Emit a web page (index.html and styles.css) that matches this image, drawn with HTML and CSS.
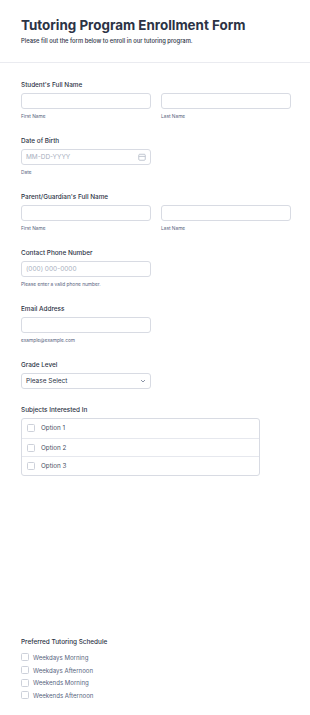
FILE: index.html
```html
<!DOCTYPE html>
<html>
<head lang="en">
    <meta charset="UTF-8">
    <title>Tutoring Program Enrollment Form</title>
    <link rel="stylesheet" href="styles.css">
</head>
<body>
<div class="header">
    <h1>Tutoring Program Enrollment Form</h1>
    <p>Please fill out the form below to enroll in our tutoring program.</p>
</div>
<div class="form">
    <div class="field">
        <div class="label">Student's Full Name</div>
        <div class="pair">
            <div>
                <div class="input"></div>
                <div class="sub">First Name</div>
            </div>
            <div>
                <div class="input"></div>
                <div class="sub">Last Name</div>
            </div>
        </div>
    </div>
    <div class="field">
        <div class="label">Date of Birth</div>
        <div class="input half">
            <span class="ph">MM-DD-YYYY</span>
            <svg width="8" height="8" viewBox="0 0 8 8"><rect x="0.75" y="1.25" width="6.5" height="6" rx="1" fill="none" stroke="#b4bac6" stroke-width="0.8"/><line x1="0.75" y1="3.4" x2="7.25" y2="3.4" stroke="#b4bac6" stroke-width="0.8"/></svg>
        </div>
        <div class="sub">Date</div>
    </div>
    <div class="field">
        <div class="label">Parent/Guardian's Full Name</div>
        <div class="pair">
            <div>
                <div class="input"></div>
                <div class="sub">First Name</div>
            </div>
            <div>
                <div class="input"></div>
                <div class="sub">Last Name</div>
            </div>
        </div>
    </div>
    <div class="field">
        <div class="label">Contact Phone Number</div>
        <div class="input half"><span class="ph">(000) 000-0000</span></div>
        <div class="sub">Please enter a valid phone number.</div>
    </div>
    <div class="field">
        <div class="label">Email Address</div>
        <div class="input half"></div>
        <div class="sub">example@example.com</div>
    </div>
    <div class="field">
        <div class="label">Grade Level</div>
        <div class="input half select">
            <span>Please Select</span>
            <svg width="6" height="4" viewBox="0 0 6 4"><path d="M1 1l2 2 2-2" fill="none" stroke="#6f7a90" stroke-width="0.8"/></svg>
        </div>
    </div>
    <div class="field">
        <div class="label">Subjects Interested In</div>
        <div class="options">
            <div class="opt"><span class="box"></span>Option 1</div>
            <div class="opt"><span class="box"></span>Option 2</div>
            <div class="opt"><span class="box"></span>Option 3</div>
        </div>
    </div>
    <div class="field schedule">
        <div class="label">Preferred Tutoring Schedule</div>
        <div class="check"><span class="box"></span>Weekdays Morning</div>
        <div class="check"><span class="box"></span>Weekdays Afternoon</div>
        <div class="check"><span class="box"></span>Weekends Morning</div>
        <div class="check"><span class="box"></span>Weekends Afternoon</div>
    </div>
</div>
</body>
</html>
```
FILE: styles.css
```css
*{
    margin:0;
    padding:0;
    box-sizing: border-box;
}
body{
    font-family: Inter, "Noto Sans", sans-serif;
    color: #2c3345;
    background: #fff;
}
.header{
    padding: 16px 21px 17px;
    border-bottom: 1px solid #eaebf0;
}
.header h1{
    font-size: 13.4px;
    font-weight: 700;
    line-height: 18px;
}
.header p{
    font-size: 5.8px;
    font-weight: 500;
    line-height: 9px;
    margin-top: 2px;
}
.form{
    padding: 17px 19px 0 21px;
}
.field{
    margin-bottom: 16px;
}
.label{
    font-size: 6.4px;
    font-weight: 500;
    line-height: 10px;
    margin-bottom: 3px;
}
.pair{
    display: grid;
    grid-template-columns: 1fr 1fr;
    column-gap: 10px;
}
.input{
    height: 16px;
    border: 1px solid #d8dbe3;
    border-radius: 3px;
    display: flex;
    align-items: center;
    justify-content: space-between;
    padding: 0 4px;
    font-size: 6.5px;
}
.half{
    width: 130px;
}
.ph{
    color: #a9b0c0;
}
.select span{
    color: #2c3345;
}
.sub{
    font-size: 4.8px;
    color: #57647e;
    margin-top: 4px;
    line-height: 7px;
}
.options{
    width: 239px;
    border: 1px solid #d8dbe3;
    border-radius: 3px;
}
.opt{
    height: 18.7px;
    display: flex;
    align-items: center;
    padding-left: 5px;
    font-size: 6.3px;
    color: #464f63;
    border-top: 1px solid #e6e8ee;
}
.opt:first-child{
    border-top: 0;
}
.box{
    width: 8px;
    height: 8px;
    border: 1px solid #cdd1da;
    border-radius: 1.5px;
    margin-right: 6px;
    background: #fff;
}
.schedule{
    margin-top: 161px;
}
.schedule .label{
    margin-bottom: 4px;
}
.check{
    height: 12.7px;
    display: flex;
    align-items: center;
    font-size: 6.1px;
    color: #57647e;
}
.check .box{
    margin-right: 4px;
}
```
